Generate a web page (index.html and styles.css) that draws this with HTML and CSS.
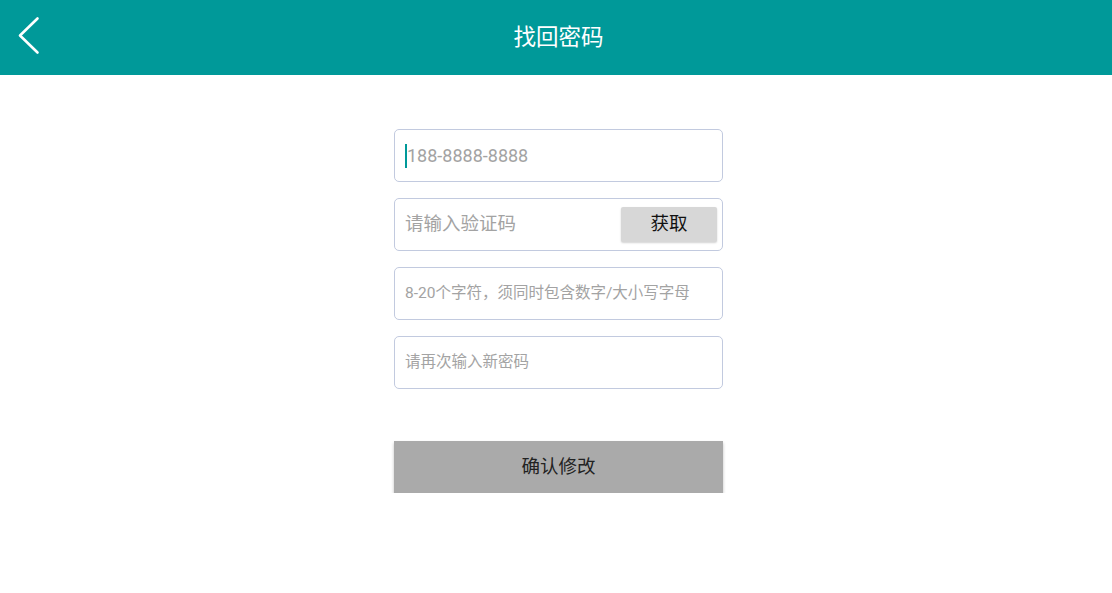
FILE: index.html
```html
<!DOCTYPE html>
<html lang="zh-CN">
<head>
<meta charset="utf-8">
<title>找回密码</title>
<link rel="stylesheet" href="styles.css">
</head>
<body>
<header class="topbar">
  <a class="back" href="#" aria-label="返回">
    <svg width="40" height="75" viewBox="0 0 40 75"><polyline points="37.5,18.5 20,35.5 37.5,52.5" fill="none" stroke="#ffffff" stroke-width="2.6" stroke-linecap="round" stroke-linejoin="round"/></svg>
  </a>
  <h1 class="title">找回密码</h1>
</header>
<main class="page">
  <form class="form">
    <div class="field"><span class="caret"></span><span class="ph ph-num">188-8888-8888</span></div>
    <div class="field field-cjk"><span class="ph ph-big">请输入验证码</span><span class="get"><span class="get-label">获取</span></span></div>
    <div class="field field-cjk"><span class="ph ph-small">8-20个字符，须同时包含数字/大小写字母</span></div>
    <div class="field field-cjk"><span class="ph ph-small">请再次输入新密码</span></div>
    <div class="submit"><span class="submit-label">确认修改</span></div>
  </form>
</main>
</body>
</html>
```

FILE: styles.css
```css
html, body {
  margin: 0;
  padding: 0;
  background: #ffffff;
  font-family: Roboto, "Noto Sans CJK SC", "Noto Sans", sans-serif;
}
.topbar {
  height: 75px;
  background: #009999;
  display: flex;
  align-items: center;
  justify-content: center;
  position: relative;
  padding-left: 5px;
}
.back {
  position: absolute;
  left: 0;
  top: 0;
  display: block;
  width: 40px;
  height: 75px;
}
.back svg { display: block; }
.title {
  margin: 0;
  color: #ffffff;
  font-size: 22.5px;
  font-weight: normal;
  line-height: 1;
}
.page {
  display: flex;
  justify-content: center;
  padding: 54px 0 0 5px;
}
.form {
  width: 329px;
  display: flex;
  flex-direction: column;
  gap: 16px;
}
.field {
  box-sizing: border-box;
  height: 53px;
  border: 1.5px solid #c2cadf;
  border-radius: 5px;
  display: flex;
  align-items: center;
  padding: 0 5px 0 10px;
}
.field-cjk .ph {
  line-height: 1;
}
.caret {
  width: 2px;
  height: 24px;
  background: #009999;
  flex: none;
}
.ph {
  color: #a3a3a3;
  white-space: nowrap;
}
.ph-num {
  font-size: 18px;
}
.ph-big {
  font-size: 18.5px;
  flex: 1;
}
.ph-small {
  font-size: 15.5px;
}
.get {
  width: 96px;
  height: 35px;
  background: #d7d7d7;
  border-radius: 2px;
  box-shadow: 0 1px 2px rgba(0,0,0,0.18);
  color: #111111;
  font-size: 18.5px;
  display: flex;
  align-items: center;
  justify-content: center;
}
.get-label {
  line-height: 1;
}
.submit {
  margin-top: 36px;
  height: 52px;
  background: #aaaaaa;
  color: #222222;
  font-size: 18.5px;
  display: flex;
  align-items: center;
  justify-content: center;
  box-shadow: 0 2px 3px rgba(0,0,0,0.25);
}
.submit-label {
  line-height: 1;
}
```
